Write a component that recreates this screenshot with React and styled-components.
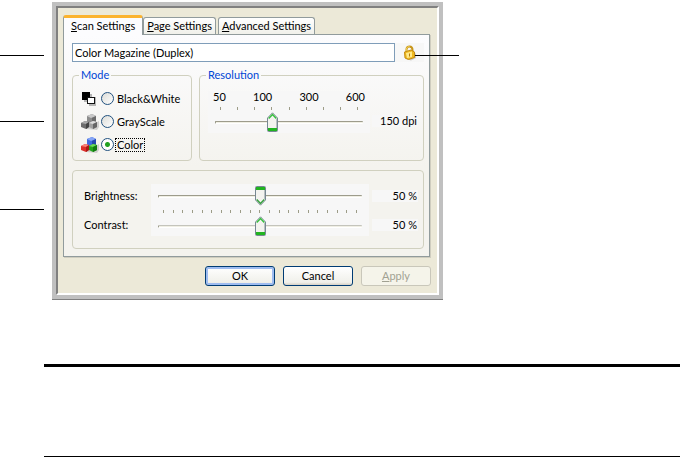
import React, { useState } from "react";
import styled, { createGlobalStyle, css } from "styled-components";

const thumbUp = `url("data:image/svg+xml,%3Csvg xmlns='http://www.w3.org/2000/svg' width='11' height='20'%3E%3Cpath d='M.5 6L5.5 .8L10.5 6V18.5Q10.5 19.5 9.5 19.5H1.5Q.5 19.5 .5 18.5Z' fill='%23f3f3ef' stroke='%23778892'/%3E%3Cpath d='M1.7 6.5L5.5 2.5L9.3 6.5' fill='none' stroke='%2338c040' stroke-width='1.5'/%3E%3Cpath d='M1 16H10V19H1Z' fill='%2321b421'/%3E%3Cpath d='M9.5 7V16' stroke='%23b9c0c2'/%3E%3C/svg%3E")`;
const thumbDown = `url("data:image/svg+xml,%3Csvg xmlns='http://www.w3.org/2000/svg' width='11' height='20'%3E%3Cpath d='M.5 14L5.5 19.2L10.5 14V1.5Q10.5 .5 9.5 .5H1.5Q.5 .5 .5 1.5Z' fill='%23f3f3ef' stroke='%23778892'/%3E%3Cpath d='M1.7 13.5L5.5 17.5L9.3 13.5' fill='none' stroke='%2338a040' stroke-width='1.5'/%3E%3Cpath d='M1 1H10V4H1Z' fill='%2321b421'/%3E%3Cpath d='M9.5 4V13' stroke='%23b9c0c2'/%3E%3C/svg%3E")`;

const BlackWhiteIcon = () => (
  <svg width="18" height="16" viewBox="0 0 18 16" aria-hidden="true">
    <path d="M3 3H11V6H15V15H8V11H3Z" fill="#888" opacity=".6" />
    <rect x="1" y="1" width="8" height="8" fill="#000" />
    <rect x="6.5" y="6.5" width="7" height="6" fill="#fff" stroke="#111" />
  </svg>
);

const CubesIcon = ({ top, left, right }) => (
  <svg width="18" height="16" viewBox="0 0 18 16" aria-hidden="true">
    <path d="M5 15L16 16L18 13V7L9 12Z" fill="#999" opacity=".4" />
    <path d="M6 2L11 0L15 2V8L10 10L6 8Z" fill={top[1]} />
    <path d="M6 2L11 0L15 2L10 4Z" fill={top[0]} />
    <path d="M11 4L15 2V8L11 10Z" fill={top[2]} />
    <path d="M0 9L4 7L8 8V13L5 15L0 13Z" fill={left[1]} />
    <path d="M0 9L4 7L8 8L5 10Z" fill={left[0]} />
    <path d="M5 10L8 8V13L5 15Z" fill={left[2]} />
    <path d="M8 9L12 7L16 8V13L12 15L8 13Z" fill={right[1]} />
    <path d="M8 9L12 7L16 8L12 10Z" fill={right[0]} />
    <path d="M12 10L16 8V13L12 15Z" fill={right[2]} />
  </svg>
);

const LockIcon = () => (
  <svg width="14" height="16" viewBox="0 0 14 16" aria-hidden="true">
    <path d="M3 14L8 15.5L13 13V8L8 13Z" fill="#888" opacity=".4" />
    <path d="M3.5 7V4Q4 1.5 6.5 1.5Q9.5 1.5 9.5 5V7" fill="none" stroke="#c8951a" strokeWidth="2" />
    <path d="M3.3 6V4Q4 1.5 6.5 1.5" fill="none" stroke="#f3d45c" />
    <path d="M1.5 7L8 5L11.5 7V12.5L5.5 14.5L2 13Z" fill="#f0b91f" stroke="#c48c12" />
    <path d="M3 8L9 6.5V12L4 13Z" fill="#ffe98a" />
    <path d="M6.5 8.5V11.5" stroke="#b57d0c" />
  </svg>
);

const gray = {
  top: ["#c9c9c9", "#8c8c8c", "#6c6c6c"],
  left: ["#a9a9a9", "#6d6d6d", "#444"],
  right: ["#dedede", "#a0a0a0", "#666"],
};
const rgb = {
  top: ["#87a6f5", "#3e6ae0", "#2549ae"],
  left: ["#f78378", "#dd2f2a", "#a81818"],
  right: ["#6fdb5c", "#23a51e", "#127a12"],
};

const modes = [
  { id: "bw", label: "Black&White", icon: <BlackWhiteIcon /> },
  { id: "gray", label: "GrayScale", icon: <CubesIcon {...gray} /> },
  { id: "color", label: "Color", icon: <CubesIcon {...rgb} /> },
];

const tabs = ["Scan Settings", "Page Settings", "Advanced Settings"];

function TickMarks({ count }) {
  return (
    <Ticks aria-hidden="true">
      {Array.from({ length: count }, (_, i) => (
        <Tick key={i} />
      ))}
    </Ticks>
  );
}

function App() {
  const [tab, setTab] = useState(0);
  const [name, setName] = useState("Color Magazine (Duplex)");
  const [mode, setMode] = useState("color");
  const [resolution, setResolution] = useState(3);
  const [brightness, setBrightness] = useState(50);
  const [contrast, setContrast] = useState(50);

  const dpi = [50, 75, 100, 150, 200, 300, 400, 500, 600];

  return (
    <>
      <GlobalStyle />
      <Page>
        <Figure>
          <Callouts>
            <Callout $space={53} />
            <Callout $space={65} />
            <Callout $space={87} />
          </Callouts>
          <Frame>
            <Dialog>
              <TabList role="tablist">
                {tabs.map((label, i) => (
                  <Tab
                    key={label}
                    type="button"
                    role="tab"
                    aria-selected={tab === i}
                    $active={tab === i}
                    onClick={() => setTab(i)}
                  >
                    <u>{label[0]}</u>
                    {label.slice(1)}
                  </Tab>
                ))}
              </TabList>
              <Panel role="tabpanel">
                <NameRow>
                  <NameInput
                    aria-label="Setting name"
                    value={name}
                    onChange={(e) => setName(e.target.value)}
                  />
                  <LockButton type="button" aria-label="Lock">
                    <LockIcon />
                  </LockButton>
                  <LockCallout />
                </NameRow>
                <Groups>
                  <ModeGroup>
                    <legend>Mode</legend>
                    {modes.map((m) => (
                      <ModeOption key={m.id}>
                        <IconCell>{m.icon}</IconCell>
                        <Radio
                          type="radio"
                          name="mode"
                          checked={mode === m.id}
                          onChange={() => setMode(m.id)}
                        />
                        <ModeLabel $focused={mode === m.id}>{m.label}</ModeLabel>
                      </ModeOption>
                    ))}
                  </ModeGroup>
                  <ResolutionGroup>
                    <legend>Resolution</legend>
                    <ResolutionRow>
                      <Scale>
                        <ScaleLabels>
                          <span>50</span>
                          <span>100</span>
                          <span>300</span>
                          <span>600</span>
                        </ScaleLabels>
                        <TickMarks count={9} />
                        <SliderCell>
                          <Slider
                            type="range"
                            aria-label="Resolution"
                            min="0"
                            max="8"
                            value={resolution}
                            onChange={(e) => setResolution(Number(e.target.value))}
                          />
                        </SliderCell>
                      </Scale>
                      <Value>{dpi[resolution]} dpi</Value>
                    </ResolutionRow>
                  </ResolutionGroup>
                </Groups>
                <Adjustments>
                  <Column>
                    <label htmlFor="brightness">Brightness:</label>
                    <label htmlFor="contrast">Contrast:</label>
                  </Column>
                  <Sliders>
                    <Slider
                      id="brightness"
                      type="range"
                      $down
                      value={brightness}
                      onChange={(e) => setBrightness(e.target.value)}
                    />
                    <TickMarks count={21} />
                    <Slider
                      id="contrast"
                      type="range"
                      $light
                      value={contrast}
                      onChange={(e) => setContrast(e.target.value)}
                    />
                  </Sliders>
                  <Column>
                    <Value>{brightness} %</Value>
                    <Value>{contrast} %</Value>
                  </Column>
                </Adjustments>
              </Panel>
              <Actions>
                <Button type="button" $primary>OK</Button>
                <Button type="button">Cancel</Button>
                <Button type="button" disabled>
                  <u>A</u>pply
                </Button>
              </Actions>
            </Dialog>
          </Frame>
        </Figure>
        <Rule $thick />
        <Rule />
      </Page>
    </>
  );
}

export default App;

const GlobalStyle = createGlobalStyle`
  * {
    box-sizing: border-box;
  }
  body {
    margin: 0;
    background: #fff;
    color: #000;
    font: 11px/12px Lato, "Liberation Sans", Arial, sans-serif;
  }
  button, input {
    font: inherit;
    color: inherit;
    margin: 0;
  }
`;

const Page = styled.main`
  padding-top: 2px;
`;

const Figure = styled.section`
  display: grid;
  grid-template-columns: 44px minmax(0, 391px);
  column-gap: 8px;
  margin-bottom: 65px;
`;

const Callouts = styled.div`
  display: flex;
  flex-direction: column;
`;

const Callout = styled.div`
  height: 1px;
  margin-top: ${({ $space }) => $space}px;
  background: #000;
`;

const Frame = styled.div`
  border: 4px solid #c0c0c0;
  box-shadow: 0 1px 0 #808080;
`;

const Dialog = styled.div`
  padding: 7px 6px 7px 5px;
  background: #ece9d8;
  border: 2px solid #fff;
  border-top-color: #808080;
  border-left-color: #808080;
`;

const TabList = styled.div`
  display: flex;
  align-items: flex-end;
  height: 19px;
`;

const Tab = styled.button`
  height: 17px;
  padding: 0 3px;
  margin-right: 2px;
  border: 1px solid #919b9c;
  border-bottom: 0;
  border-radius: 3px 3px 0 0;
  background: linear-gradient(#fff, #f0f0ea);
  white-space: nowrap;
  ${({ $active }) =>
    $active &&
    css`
      position: relative;
      height: 20px;
      margin-right: 0;
      margin-bottom: -1px;
      padding: 0 7px 1px;
      border-top: 3px solid #fbb32f;
      background: #fcfcfe;
    `}
`;

const Panel = styled.div`
  margin-right: 1px;
  padding: 8px 5px 7px 8px;
  border: 1px solid #919b9c;
  box-shadow: 1px 1px 0 #cfcdbf;
  background: linear-gradient(#fcfcfe, #f4f3ee 60%);
`;

const NameRow = styled.div`
  position: relative;
  display: flex;
  align-items: center;
  height: 19px;
  margin-bottom: 7px;
`;

const NameInput = styled.input`
  flex: 1;
  min-width: 0;
  height: 19px;
  padding: 0 2px;
  border: 1px solid #7f9db9;
  background: #fff;
`;

const LockButton = styled.button`
  display: flex;
  align-items: center;
  justify-content: center;
  width: 29px;
  height: 19px;
  padding: 0;
  border: 0;
  background: #f7f7f7;
`;

/* leader line running from the lock out past the dialog edge */
const LockCallout = styled.div`
  position: absolute;
  top: 12px;
  right: -35px;
  width: 44px;
  height: 1px;
  background: #000;
`;

const Groups = styled.div`
  display: flex;
  gap: 7px;
  margin-bottom: 9px;
`;

const Group = styled.fieldset`
  min-width: 0;
  height: 92px;
  margin: 0;
  padding: 0 5px 0 8px;
  border: 1px solid #d0d0bf;
  border-radius: 4px;
  legend {
    margin-left: -2px;
    padding: 0 2px;
    color: #0046d5;
  }
`;

const ModeGroup = styled(Group)`
  width: 120px;
  padding-top: 6px;
`;

const ResolutionGroup = styled(Group)`
  flex: 1;
  padding-top: 10px;
`;

const ModeOption = styled.label`
  display: flex;
  align-items: center;
  height: 23px;
`;

const IconCell = styled.span`
  display: flex;
  width: 20px;
`;

const Radio = styled.input`
  appearance: none;
  width: 13px;
  height: 13px;
  flex: none;
  border: 1px solid #21517f;
  border-radius: 50%;
  background: linear-gradient(135deg, #dcdcd7, #fff);
  &:checked {
    background: radial-gradient(circle, #21a121 0 2px, #fff 3px);
  }
`;

const ModeLabel = styled.span`
  margin-left: 1px;
  padding: 0 1px;
  border: 1px dotted ${({ $focused }) => ($focused ? "#000" : "transparent")};
`;

const ResolutionRow = styled.div`
  display: flex;
  align-items: flex-end;
  gap: 2px;
`;

const Scale = styled.div`
  flex: 1;
  display: grid;
  grid-template-rows: 14px 7px 21px;
  padding: 0 5px;
  background: #f7f7f7;
`;

const ScaleLabels = styled.div`
  display: flex;
  justify-content: space-between;
`;

const Ticks = styled.div`
  display: flex;
  justify-content: space-between;
  align-items: center;
  padding: 0 5px;
  ${ScaleLabels} + & {
    padding: 0 7px;
  }
`;

const Tick = styled.span`
  width: 1px;
  height: 3px;
  background: #9d9c88;
`;

const SliderCell = styled.div`
  padding: 0 2px;
`;

const Slider = styled.input`
  appearance: none;
  display: block;
  width: 100%;
  height: 20px;
  background: transparent;
  &::-webkit-slider-runnable-track {
    height: 3px;
    border-top: 1px solid ${({ $light }) => ($light ? "#c4c4bc" : "#9d9c8c")};
    border-left: 1px solid #9d9c8c;
    border-bottom: 1px solid #fff;
    border-radius: 1px;
    background: #f0efe4;
  }
  &::-webkit-slider-thumb {
    appearance: none;
    width: 11px;
    height: 20px;
    margin-top: -10px;
    background: ${({ $down }) => ($down ? thumbDown : thumbUp)} no-repeat;
  }
`;

const Value = styled.output`
  width: 46px;
  padding-right: 1px;
  background: #f7f7f7;
  text-align: right;
  ${ResolutionRow} > & {
    margin-bottom: 6px;
  }
`;

const Adjustments = styled.div`
  display: grid;
  grid-template-columns: 67px 1fr 46px;
  height: 79px;
  padding: 13px 5px 0 11px;
  border: 1px solid #d0d0bf;
  border-radius: 4px;
`;

const Sliders = styled.div`
  display: grid;
  grid-template-rows: 20px 10px 20px;
  align-self: start;
  margin-right: 3px;
  padding: 2px 7px 0;
  background: #f7f7f7;
`;

const Column = styled.div`
  display: flex;
  flex-direction: column;
  gap: 17px;
  padding-top: 6px;
`;

const Actions = styled.div`
  display: flex;
  justify-content: flex-end;
  gap: 8px;
  margin-top: 9px;
`;

const Button = styled.button`
  width: 70px;
  height: 20px;
  padding: 0;
  border: 1px solid #003c74;
  border-radius: 3px;
  background: linear-gradient(#fff, #f0f0ea 85%, #d6d0c5);
  ${({ $primary }) =>
    $primary &&
    css`
      box-shadow: inset 0 0 0 2px #9ebcf0;
    `}
  &:disabled {
    border-color: #c9c7ba;
    background: #f5f4ea;
    color: #a1a192;
  }
`;

const Rule = styled.hr`
  height: ${({ $thick }) => ($thick ? 3 : 1)}px;
  margin: 0 0 0 44px;
  border: 0;
  background: #000;
  & + & {
    margin-top: 89px;
  }
`;
